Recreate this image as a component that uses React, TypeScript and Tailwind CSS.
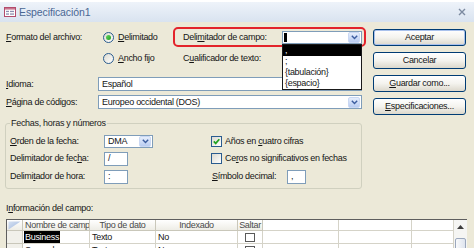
import React from "react";

const U = ({ children }: { children: React.ReactNode }) => (
  <span className="underline decoration-1 underline-offset-[1px]">{children}</span>
);

const Chevron = () => (
  <svg width="7" height="5" viewBox="0 0 7 5">
    <path d="M0.8 0.8 L3.5 3.6 L6.2 0.8" fill="none" stroke="#3B5C9E" strokeWidth="1.4" />
  </svg>
);

const ComboBtn = () => (
  <span className="flex h-[11px] w-[12px] shrink-0 items-center justify-center rounded-[2px] border border-[#CAD8F3] bg-gradient-to-b from-[#E6EEFC] to-[#B9CCF1]">
    <Chevron />
  </span>
);

const Radio = ({ checked }: { checked?: boolean }) => (
  <span className="flex h-[11px] w-[11px] shrink-0 items-center justify-center rounded-full border border-[#2A5C8F] bg-gradient-to-br from-[#DCDAD0] to-white">
    {checked && <span className="h-[5px] w-[5px] rounded-full bg-gradient-to-br from-[#62D862] to-[#1E9E1E]" />}
  </span>
);

const Check = ({ checked }: { checked?: boolean }) => (
  <span className="flex h-[11px] w-[11px] shrink-0 items-center justify-center border border-[#2A5C8F] bg-gradient-to-br from-[#DCDAD0] to-white">
    {checked && (
      <svg width="9" height="9" viewBox="0 0 9 9">
        <path d="M1.8 4.4 L3.7 6.4 L7.3 2.2" fill="none" stroke="#21A121" strokeWidth="1.7" />
      </svg>
    )}
  </span>
);

const Btn = ({ children, def }: { children: React.ReactNode; def?: boolean }) => (
  <div
    className={
      def
        ? "flex h-[17px] items-center justify-center rounded-[3px] border border-[#003C74] bg-gradient-to-b from-white via-[#F4F3EE] to-[#DCD8CC] shadow-[inset_0_0_0_1px_#A9C1EC]"
        : "flex h-[17px] items-center justify-center rounded-[3px] border border-[#003C74] bg-gradient-to-b from-white via-[#F4F3EE] to-[#DCD8CC]"
    }
  >
    {children}
  </div>
);

const SmallBox = ({ w, children }: { w: string; children?: React.ReactNode }) => (
  <div className={`${w} flex h-[14px] items-center border border-[#7F9DB9] bg-white pl-[3px]`}>{children}</div>
);

const HeadCell = ({ children }: { children?: React.ReactNode }) => (
  <div className="flex items-center justify-center overflow-hidden whitespace-nowrap border-b border-r border-[#C9C7BA] bg-gradient-to-b from-white to-[#EEEDE6] text-[#4A4A4A]">
    {children}
  </div>
);

const EmptyHead = () => <div className="border-b border-r border-[#D5D3C8] bg-white" />;
const Cell = ({ children }: { children?: React.ReactNode }) => (
  <div className="flex items-center overflow-hidden whitespace-nowrap border-b border-r border-[#D5D3C8] bg-white pl-[2px]">
    {children}
  </div>
);

const Row = ({ name, sel }: { name: string; sel?: boolean }) => (
  <>
    <div className="border-b border-r border-[#C9C7BA] bg-[#F1F0EA]" />
    <div className="flex items-stretch overflow-hidden whitespace-nowrap border-b border-r border-[#D5D3C8] bg-white pl-[1px]">
      <span className={sel ? "flex items-center bg-black px-[1px] text-white" : "flex items-center px-[1px]"}>{name}</span>
    </div>
    <Cell>Texto</Cell>
    <Cell>No</Cell>
    <div className="flex items-center justify-center border-b border-r border-[#D5D3C8] bg-white">
      <span className="h-[9px] w-[10px] border border-[#5A5A5A] bg-white" />
    </div>
    <Cell />
    <Cell />
    <Cell />
  </>
);

export default function App() {
  return (
    <div className="relative h-[248px] w-[474px] overflow-hidden bg-[#ECE9D8] font-['Liberation_Sans',Arial,sans-serif] text-[9px] leading-none tracking-[-0.3px] text-[#151515]">
      {/* Title bar */}
      <div className="flex h-[22px] items-center border-t-2 border-white bg-gradient-to-b from-[#EEF3FA] to-[#D9E3F0] pl-[4px] pr-[8px]">
        <svg width="12" height="10" viewBox="0 0 12 10">
          <rect x="0.5" y="0.5" width="11" height="9" fill="#fff" stroke="#B34C6C" />
          <rect x="1" y="1" width="10" height="1.6" fill="#C9738E" />
          <rect x="2" y="3.8" width="3" height="1.3" fill="#8C8FB0" />
          <rect x="6" y="3.8" width="4" height="1.3" fill="#8C8FB0" />
          <rect x="2" y="6.4" width="3" height="1.3" fill="#8C8FB0" />
          <rect x="6" y="6.4" width="4" height="1.3" fill="#8C8FB0" />
        </svg>
        <span className="ml-[3px] text-[10.5px] tracking-[-0.1px] text-[#4A6794]">Especificación1</span>
        <svg className="ml-auto" width="8" height="8" viewBox="0 0 8 8">
          <path d="M1 1 L7 7 M7 1 L1 7" stroke="#7C8AA0" strokeWidth="1.4" />
        </svg>
      </div>

      <div className="flex">
        {/* Left column */}
        <div className="w-[366px] pl-[6px] pt-[5px]">
          <div className="flex h-[20px] items-center">
            <span className="w-[92px]">
              <U>F</U>ormato del archivo:
            </span>
            <div className="flex w-[75px] items-center pl-[5px]">
              <Radio checked />
              <span className="ml-[4px]">
                <U>D</U>elimitado
              </span>
            </div>
            <div className="flex h-[20px] w-[193px] items-center rounded-[5px] border-2 border-[#E3242B] pl-[8px]">
              <span className="w-[99px]">
                Deli<U>m</U>itador de campo:
              </span>
              <div className="relative">
                <div className="flex h-[13px] w-[80px] items-center border border-[#7F9DB9] bg-white pl-[1px] pr-[1px]">
                  <span className="h-[9px] w-[3px] bg-black" />
                  <span className="ml-auto">
                    <ComboBtn />
                  </span>
                </div>
                <div className="absolute left-0 top-full z-10 w-[80px] border border-[#1A1A1A] bg-white">
                  <div className="flex h-[11px] items-center bg-black pl-[2px] text-white">,</div>
                  <div className="flex h-[11px] items-center pl-[2px]">;</div>
                  <div className="flex h-[11px] items-center pl-[2px]">{"{tabulación}"}</div>
                  <div className="flex h-[11px] items-center pl-[2px]">{"{espacio}"}</div>
                </div>
              </div>
            </div>
          </div>

          <div className="mt-[1px] flex h-[20px] items-center">
            <span className="w-[92px]" />
            <div className="flex w-[75px] items-center pl-[5px]">
              <Radio />
              <span className="ml-[4px]">
                <U>A</U>ncho fijo
              </span>
            </div>
            <span className="pl-[10px]">
              C<U>u</U>alificador de texto:
            </span>
          </div>

          <div className="mt-[9px] flex h-[14px] items-center">
            <span className="w-[92px]">
              <U>I</U>dioma:
            </span>
            <SmallBox w="w-[264px]">Español</SmallBox>
          </div>

          <div className="mt-[4px] flex h-[14px] items-center">
            <span className="w-[92px]">
              <U>P</U>ágina de códigos:
            </span>
            <div className="flex h-[14px] w-[264px] items-center border border-[#7F9DB9] bg-white pl-[3px] pr-[1px]">
              <span>Europeo occidental (DOS)</span>
              <span className="ml-auto">
                <ComboBtn />
              </span>
            </div>
          </div>

          <fieldset className="-ml-[1px] mt-[10px] w-[357px] rounded-[3px] border border-[#D0D0BF] px-[4px] pb-[5px]">
            <legend className="px-[1px] text-[#222]">Fechas, horas y números</legend>
            <div className="mt-[7px] flex h-[13px] items-center">
              <span className="w-[94px]">
                <U>O</U>rden de la fecha:
              </span>
              <div className="flex h-[13px] w-[49px] items-center border border-[#7F9DB9] bg-white pl-[3px] pr-[1px]">
                <span>DMA</span>
                <span className="ml-auto">
                  <ComboBtn />
                </span>
              </div>
              <div className="ml-[58px] flex items-center">
                <Check checked />
                <span className="ml-[3px]">
                  Años en <U>c</U>uatro cifras
                </span>
              </div>
            </div>
            <div className="mt-[4px] flex h-[13px] items-center">
              <span className="w-[94px]">
                Delimitador de fec<U>h</U>a:
              </span>
              <SmallBox w="w-[24px]">/</SmallBox>
              <div className="ml-[83px] flex items-center">
                <Check />
                <span className="ml-[3px]">
                  Ce<U>r</U>os no significativos en fechas
                </span>
              </div>
            </div>
            <div className="mt-[5px] flex h-[13px] items-center">
              <span className="w-[94px]">
                Delimi<U>t</U>ador de hora:
              </span>
              <SmallBox w="w-[24px]">:</SmallBox>
              <span className="ml-[84px] w-[75px]">
                <U>S</U>ímbolo decimal:
              </span>
              <SmallBox w="w-[19px]">,</SmallBox>
            </div>
          </fieldset>
        </div>

        {/* Buttons */}
        <div className="ml-[7px] flex w-[93px] flex-col gap-[6px] pt-[7px]">
          <Btn def>Aceptar</Btn>
          <Btn>Cancelar</Btn>
          <Btn>
            <span>
              <U>G</U>uardar como...
            </span>
          </Btn>
          <Btn>
            <span>
              <U>E</U>specificaciones...
            </span>
          </Btn>
        </div>
      </div>

      <div className="mt-[14px] flex h-[10px] items-center pl-[6px]">
        <span>
          I<U>n</U>formación del campo:
        </span>
      </div>

      <div className="ml-[6px] mt-[6px] flex w-[461px] border-l border-t border-[#5E5E5E]">
        <div className="grid w-[448px] grid-cols-[16px_67px_66px_82px_25px_76px_73px_42px] grid-rows-[11px_13px_13px] bg-white">
          <div className="flex items-center justify-center border-b border-r border-[#C9C7BA] bg-gradient-to-b from-white to-[#EEEDE6]">
            <svg width="13" height="9" viewBox="0 0 13 9">
              <defs>
                <linearGradient id="cg" x1="0" y1="0" x2="1" y2="1">
                  <stop offset="0" stopColor="#D7E2F3" />
                  <stop offset="1" stopColor="#9DB5DC" />
                </linearGradient>
              </defs>
              <polygon points="0.5,0.5 12.5,0.5 0.5,8.5" fill="url(#cg)" />
            </svg>
          </div>
          <HeadCell>
            <span className="w-full overflow-hidden pl-[2px]">Nombre de campo</span>
          </HeadCell>
          <HeadCell>Tipo de dato</HeadCell>
          <HeadCell>Indexado</HeadCell>
          <HeadCell>Saltar</HeadCell>
          <EmptyHead />
          <EmptyHead />
          <EmptyHead />
          <Row name="Business" sel />
          <Row name="Segundo" />
        </div>
        <div className="flex w-[13px] flex-col items-center bg-[#F5F5F3]">
          <svg className="mt-[5px]" width="7" height="4" viewBox="0 0 7 4">
            <polygon points="3.5,0 7,4 0,4" fill="#3D3D3D" />
          </svg>
          <div className="mt-[9px] h-[20px] w-[11px] rounded-[2px] border border-[#9AA7BD] bg-gradient-to-r from-[#F9FAFC] to-[#DEE4EE]" />
        </div>
      </div>
    </div>
  );
}
